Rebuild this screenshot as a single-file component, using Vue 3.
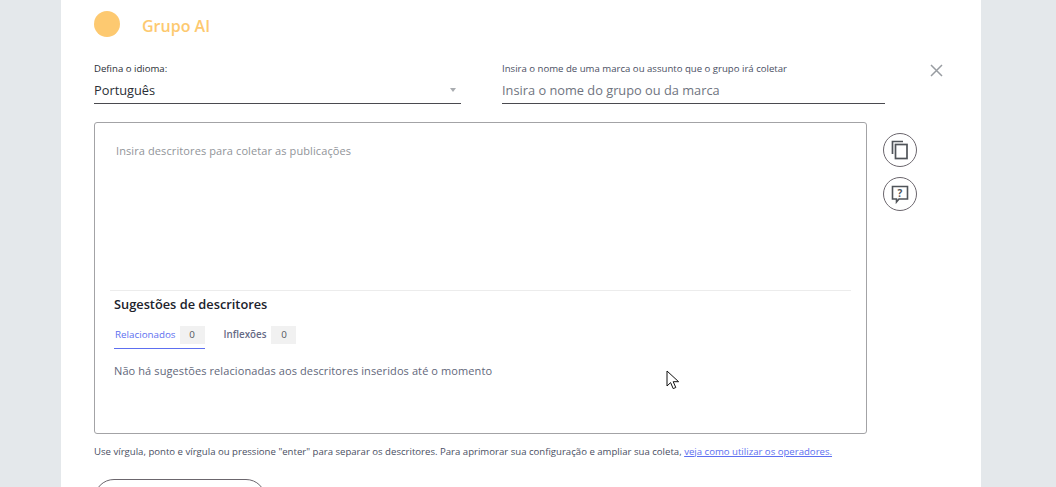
<script setup>
const tabs = [
  { label: 'Relacionados', count: 0, active: true },
  { label: 'Inflexões', count: 0, active: false },
]
</script>

<template>
  <div class="page">
    <main class="card">
      <header class="head">
        <span class="dot"></span>
        <h1 class="title">Grupo AI</h1>
      </header>

      <section class="fields">
        <div class="field lang">
          <label class="label">Defina o idioma:</label>
          <div class="control">
            <span class="value">Português</span>
            <span class="caret"></span>
          </div>
        </div>
        <div class="field name">
          <label class="label soft">Insira o nome de uma marca ou assunto que o grupo irá coletar</label>
          <div class="control">
            <span class="value hint">Insira o nome do grupo ou da marca</span>
          </div>
        </div>
        <button class="close" aria-label="Fechar">
          <svg width="13" height="13" viewBox="0 0 13 13"><path d="M1 1l11 11M12 1L1 12" stroke="#989ca1" stroke-width="1.5" fill="none" /></svg>
        </button>
      </section>

      <section class="editor">
        <div class="box">
          <p class="placeholder">Insira descritores para coletar as publicações</p>
          <div class="suggest">
            <h2 class="s-title">Sugestões de descritores</h2>
            <div class="tabs">
              <div v-for="t in tabs" :key="t.label" class="tab" :class="{ active: t.active }">
                <span class="tab-label">{{ t.label }}</span>
                <span class="count">{{ t.count }}</span>
              </div>
            </div>
            <p class="empty">Não há sugestões relacionadas aos descritores inseridos até o momento</p>
          </div>
          <svg class="cursor" width="14" height="20" viewBox="0 0 14 20"><path d="M1 1v15l3.6-3.4 2.6 6 2.6-1.1-2.6-5.8H12.600z" fill="#fff" stroke="#111" stroke-width="1" stroke-linejoin="miter" /></svg>
        </div>
        <div class="tools">
          <button class="tool" aria-label="Copiar">
            <svg width="18" height="20" viewBox="0 0 18 20" fill="none" stroke="#505459" stroke-width="1.7"><path d="M1.500 14V1.500H12" /><rect x="4.500" y="4.500" width="11.500" height="14" /></svg>
          </button>
          <button class="tool" aria-label="Ajuda">
            <svg width="18" height="19" viewBox="0 0 18 19" fill="none"><path d="M1.500 1.500h15v12.500H8l-2.500 3v-3h-4z" stroke="#505459" stroke-width="1.600" /><text x="9" y="11.500" text-anchor="middle" class="q">?</text></svg>
          </button>
        </div>
      </section>

      <p class="note">Use vírgula, ponto e vírgula ou pressione "enter" para separar os descritores. Para aprimorar sua configuração e ampliar sua coleta, <a class="link">veja como utilizar os operadores.</a></p>

      <button class="outline"></button>
    </main>
  </div>
</template>

<style scoped>
.page {
  height: 487px;
  overflow: hidden;
  background: #e4e8eb;
  font-family: "Open Sans", "Liberation Sans", sans-serif;
  padding: 0 75px 0 61px;
}
.card {
  width: 920px;
  height: 600px;
  background: #fff;
  padding: 11px 0 0 33px;
  box-sizing: border-box;
}
.head {
  display: flex;
  align-items: center;
  height: 26px;
}
.dot {
  width: 26px;
  height: 26px;
  border-radius: 50%;
  background: #fdc970;
}
.title {
  margin: 4px 0 0 22px;
  font-size: 16px;
  line-height: 22px;
  font-weight: 600;
  color: #fdc970;
}
.fields {
  display: flex;
  margin-top: 25px;
}
.field {
  display: flex;
  flex-direction: column;
}
.lang {
  width: 367px;
}
.name {
  width: 383px;
  margin-left: 41px;
}
.label {
  font-size: 9.600px;
  line-height: 14px;
  color: #2b2f36;
}
.label.soft {
  color: #4a4f63;
}
.control {
  display: flex;
  align-items: center;
  justify-content: space-between;
  height: 27px;
  border-bottom: 1px solid #4a4a4f;
}
.value {
  font-size: 12.800px;
  color: #2b2f36;
}
.value.hint {
  color: #6f7480;
}
.caret {
  width: 0;
  height: 0;
  margin-right: 5px;
  border-left: 3.500px solid transparent;
  border-right: 3.500px solid transparent;
  border-top: 4px solid #a9acb0;
}
.close {
  width: 13px;
  height: 13px;
  margin: 2px 0 0 45px;
  padding: 0;
  border: 0;
  background: none;
  line-height: 0;
}
.editor {
  display: flex;
  margin-top: 18px;
}
.box {
  position: relative;
  width: 773px;
  height: 312px;
  box-sizing: border-box;
  border: 1px solid #a3a3a6;
  border-radius: 3px;
  padding: 20px 15px 0;
}
.placeholder {
  margin: 0 0 0 6px;
  font-size: 11px;
  line-height: 15px;
  letter-spacing: 0.1px;
  color: #919499;
}
.suggest {
  margin-top: 132px;
  border-top: 1px solid #ececec;
  padding: 4px 0 0 4px;
}
.s-title {
  margin: 0;
  font-size: 12.800px;
  line-height: 18px;
  font-weight: 600;
  color: #20222b;
}
.tabs {
  display: flex;
  gap: 19px;
  margin-top: 13px;
}
.tab {
  display: flex;
  align-items: flex-start;
  height: 22px;
}
.tab.active {
  border-bottom: 1px solid #5d6ff0;
}
.tab-label {
  font-size: 9.800px;
  line-height: 18px;
  font-weight: 600;
  color: #666a85;
  margin-right: 5px;
}
.active .tab-label {
  color: #5d6ff0;
  font-weight: 400;
  padding-left: 1px;
  margin-right: 4px;
}
.count {
  display: block;
  width: 25px;
  height: 18px;
  background: #f1f1f1;
  font-size: 9.800px;
  line-height: 18px;
  text-align: center;
  color: #55585f;
}
.empty {
  margin: 14px 0 0;
  font-size: 11px;
  line-height: 15px;
  letter-spacing: 0.1px;
  color: #62677a;
}
.cursor {
  position: absolute;
  left: 571px;
  top: 247px;
}
.tools {
  display: flex;
  flex-direction: column;
  gap: 10px;
  margin: 11px 0 0 16px;
}
.tool {
  display: flex;
  align-items: center;
  justify-content: center;
  width: 34px;
  height: 34px;
  padding: 0;
  border: 1px solid #6b666d;
  border-radius: 50%;
  background: #fff;
}
.q {
  font-family: "Open Sans", sans-serif;
  font-size: 10px;
  font-weight: 700;
  fill: #505459;
}
.note {
  margin: 11px 0 0;
  font-size: 9.600px;
  line-height: 13px;
  color: #4a4f63;
}
.link {
  color: #5d6ff0;
  text-decoration: underline;
}
.outline {
  display: block;
  width: 172px;
  height: 40px;
  margin-top: 21px;
  padding: 0;
  border: 1px solid #6b666d;
  border-radius: 20px;
  background: #fff;
}
</style>
<style>
html, body { margin: 0; overflow: hidden; }
</style>
